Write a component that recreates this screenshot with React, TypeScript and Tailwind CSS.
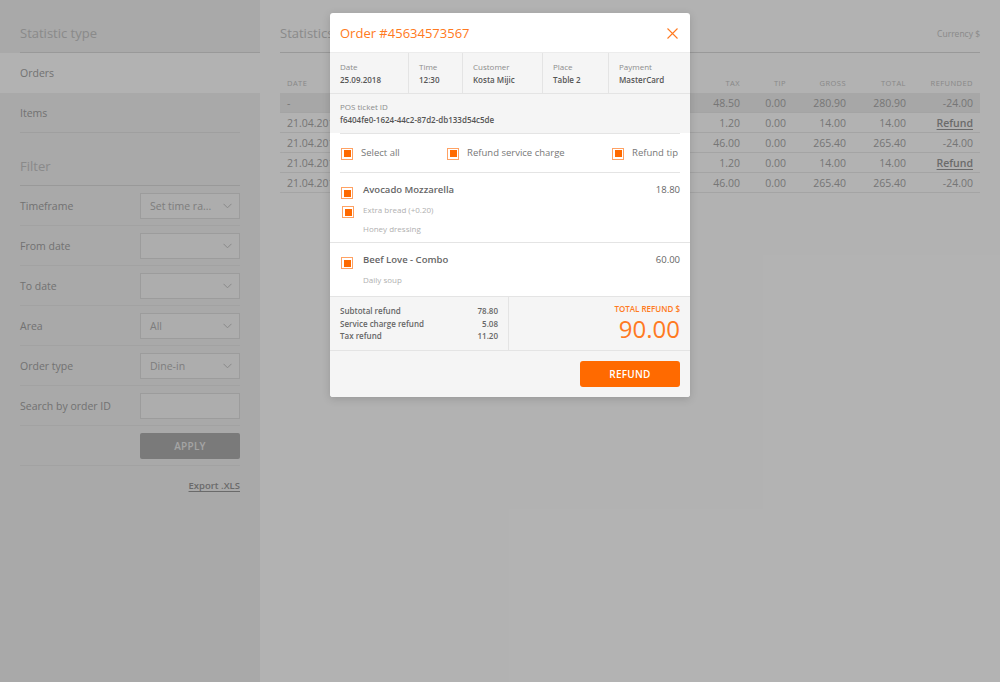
import React from 'react';

const ORANGE = '#ff7a21';

const Chevron = () => (
  <svg width="9" height="6" viewBox="0 0 9 6" fill="none">
    <polyline points="0.5,0.8 4.5,4.8 8.5,0.8" stroke="#c4c4c4" strokeWidth="1" />
  </svg>
);

const Check = ({ className = '' }: { className?: string }) => (
  <span
    className={`inline-flex w-[12px] h-[12px] shrink-0 items-center justify-center border border-[#ffa264] bg-white ${className}`}
  >
    <span className="block w-[7px] h-[7px] bg-[#ff6a00]" />
  </span>
);

type Filter = { label: string; value?: string; select: boolean };

const filters: Filter[] = [
  { label: 'Timeframe', value: 'Set time ra...', select: true },
  { label: 'From date', select: true },
  { label: 'To date', select: true },
  { label: 'Area', value: 'All', select: true },
  { label: 'Order type', value: 'Dine-in', select: true },
  { label: 'Search by order ID', select: false },
];

const rows = [
  { date: '-', tax: '48.50', tip: '0.00', gross: '280.90', total: '280.90', refunded: '-24.00' },
  { date: '21.04.2018', tax: '1.20', tip: '0.00', gross: '14.00', total: '14.00', refunded: null },
  { date: '21.04.2018', tax: '46.00', tip: '0.00', gross: '265.40', total: '265.40', refunded: '-24.00' },
  { date: '21.04.2018', tax: '1.20', tip: '0.00', gross: '14.00', total: '14.00', refunded: null },
  { date: '21.04.2018', tax: '46.00', tip: '0.00', gross: '265.40', total: '265.40', refunded: '-24.00' },
];

const info = [
  { label: 'Date', value: '25.09.2018', w: 'w-[79px]' },
  { label: 'Time', value: '12:30', w: 'w-[54px]' },
  { label: 'Customer', value: 'Kosta Mijic', w: 'w-[80px]' },
  { label: 'Place', value: 'Table 2', w: 'w-[66px]' },
  { label: 'Payment', value: 'MasterCard', w: 'flex-1' },
];

const Sidebar = () => (
  <aside className="w-[260px] shrink-0 bg-[#f2f2f2]">
    <div className="ml-5 h-[53px] pt-[16px] flex items-center border-b border-[#dcdcdc] text-[13px] text-[#c6c6c6]">
      Statistic type
    </div>
    <div className="h-[40px] pt-[2px] bg-white px-5 flex items-center text-[10.5px] text-[#a4a4a4]">Orders</div>
    <div className="mx-5 h-[40px] pt-[2px] flex items-center border-b border-[#e4e4e4] text-[10.5px] text-[#a4a4a4]">
      Items
    </div>
    <div className="mx-5 h-[53px] pt-[16px] flex items-center border-b border-[#dcdcdc] text-[13px] text-[#c6c6c6]">
      Filter
    </div>
    <div className="mx-5">
      {filters.map(f => (
        <div key={f.label} className="h-[40px] flex items-center justify-between border-b border-[#e8e8e8]">
          <span className="pt-[2px] text-[10.5px] text-[#a4a4a4]">{f.label}</span>
          <div className="w-[100px] h-[26px] border border-[#e0e0e0] bg-[#f8f8f8] flex items-center justify-between pl-[9px] pr-[7px]">
            <span className="pt-[2px] text-[10.5px] text-[#b4b4b4]">{f.value}</span>
            {f.select && <Chevron />}
          </div>
        </div>
      ))}
      <div className="h-[40px] flex items-center justify-end border-b border-[#e8e8e8]">
        <button className="w-[100px] h-[26px] pt-[2px] rounded-[2px] bg-[#afafaf] text-[10px] font-semibold tracking-wide text-[#ebebeb]">
          APPLY
        </button>
      </div>
      <div className="h-[41px] flex items-center justify-end">
        <span className="text-[9.5px] font-semibold text-[#999] underline underline-offset-2">Export .XLS</span>
      </div>
    </div>
  </aside>
);

const Stats = () => (
  <main className="flex-1 bg-white px-5">
    <div className="h-[53px] pt-[16px] flex items-center justify-between border-b border-[#dcdcdc]">
      <span className="text-[13px] text-[#c6c6c6]">Statistics</span>
      <span className="text-[8.5px] text-[#c6c6c6]">Currency $</span>
    </div>
    <div className="mt-[20px] h-[20px] pt-[2px] flex items-center px-[7px] text-[7.5px] tracking-[0.06em] text-[#c4c4c4]">
      <span className="flex-1">DATE</span>
      <span className="w-[50px] text-right">TAX</span>
      <span className="w-[46px] text-right">TIP</span>
      <span className="w-[60px] text-right">GROSS</span>
      <span className="w-[60px] text-right">TOTAL</span>
      <span className="w-[67px] text-right">REFUNDED</span>
    </div>
    {rows.map((r, i) => (
      <div
        key={i}
        className={`h-[20px] pt-[2px] flex items-center px-[7px] border-b border-[#ebebeb] text-[10.5px] text-[#aaa] ${i === 0 ? 'bg-[#f0f0f0]' : ''}`}
      >
        <span className="flex-1">{r.date}</span>
        <span className="w-[50px] text-right">{r.tax}</span>
        <span className="w-[46px] text-right">{r.tip}</span>
        <span className="w-[60px] text-right">{r.gross}</span>
        <span className="w-[60px] text-right">{r.total}</span>
        <span className="w-[67px] text-right">
          {r.refunded ?? <span className="font-semibold text-[#999] underline underline-offset-2">Refund</span>}
        </span>
      </div>
    ))}
  </main>
);

const RefundModal = () => (
  <div className="absolute left-[330px] top-[13px] w-[360px] overflow-hidden rounded-[3px] bg-white shadow-[0_2px_8px_rgba(0,0,0,0.15)]">
    <div className="h-[39px] pt-[2px] px-[10px] flex items-center justify-between">
      <span className="text-[13px]" style={{ color: ORANGE }}>
        Order #45634573567
      </span>
      <svg width="11" height="11" viewBox="0 0 11 11" className="mr-[2px]">
        <path d="M0.5 0.5 L10.5 10.5 M10.5 0.5 L0.5 10.5" stroke={ORANGE} strokeWidth="1.1" />
      </svg>
    </div>

    <div className="h-[41px] flex bg-[#f5f5f5] border-t border-[#ececec]">
      {info.map(c => (
        <div key={c.label} className={`${c.w} px-[10px] flex flex-col justify-center gap-[3px] border-r border-[#e4e4e4] last:border-r-0`}>
          <span className="text-[8px] leading-[10px] text-[#8c8c8c]">{c.label}</span>
          <span className="text-[8px] leading-[10px] font-semibold text-[#555]">{c.value}</span>
        </div>
      ))}
    </div>

    <div className="h-[40px] px-[10px] flex flex-col justify-center gap-[3px] bg-[#f5f5f5] border-t border-[#e4e4e4]">
      <span className="text-[8px] leading-[10px] text-[#8c8c8c]">POS ticket ID</span>
      <span className="text-[8px] leading-[10px] font-semibold text-[#555]">f6404fe0-1624-44c2-87d2-db133d54c5de</span>
    </div>

    <div className="mx-[10px] h-[40px] pt-[1px] flex items-center justify-between border-t border-[#e4e4e4] border-b text-[9.5px] text-[#777]">
      <label className="flex items-center gap-[8px]">
        <Check className="ml-px" /> Select all
      </label>
      <label className="flex items-center gap-[8px]">
        <Check /> Refund service charge
      </label>
      <label className="flex items-center gap-[8px] mr-[2px]">
        <Check /> Refund tip
      </label>
    </div>

    <div className="px-[10px] pt-[8px] pb-[4px] border-b border-[#e4e4e4]">
      <div className="h-[19px] flex items-center">
        <span className="w-[23px]"><Check className="ml-px" /></span>
        <span className="flex-1 text-[9.5px] font-semibold text-[#666]">Avocado Mozzarella</span>
        <span className="text-[9.5px] font-medium text-[#666]">18.80</span>
      </div>
      <div className="h-[19px] flex items-center">
        <span className="w-[23px]"><Check className="ml-[2px]" /></span>
        <span className="text-[8px] text-[#b0b0b0]">Extra bread (+0.20)</span>
      </div>
      <div className="h-[19px] flex items-center pl-[23px] text-[8px] text-[#b0b0b0]">Honey dressing</div>
    </div>

    <div className="px-[10px] pt-[8px] pb-[7px]">
      <div className="h-[19px] flex items-center">
        <span className="w-[23px]"><Check className="ml-px" /></span>
        <span className="flex-1 text-[9.5px] font-semibold text-[#666]">Beef Love - Combo</span>
        <span className="text-[9.5px] font-medium text-[#666]">60.00</span>
      </div>
      <div className="h-[19px] flex items-center pl-[23px] text-[8px] text-[#b0b0b0]">Daily soup</div>
    </div>

    <div className="h-[54px] flex bg-[#f5f5f5] border-t border-[#e4e4e4]">
      <div className="w-[179px] px-[10px] pt-px flex flex-col justify-center border-r border-[#e4e4e4] text-[8px] leading-[12.5px] font-semibold text-[#666]">
        <div className="flex justify-between"><span>Subtotal refund</span><span>78.80</span></div>
        <div className="flex justify-between"><span>Service charge refund</span><span>5.08</span></div>
        <div className="flex justify-between"><span>Tax refund</span><span>11.20</span></div>
      </div>
      <div className="flex-1 px-[10px] flex flex-col items-end justify-center">
        <span className="text-[8px] leading-[11px] font-semibold" style={{ color: ORANGE }}>TOTAL REFUND $</span>
        <span className="text-[24px] leading-[30px]" style={{ color: ORANGE }}>90.00</span>
      </div>
    </div>

    <div className="h-[47px] px-[10px] flex items-center justify-end bg-[#f5f5f5] border-t border-[#e4e4e4]">
      <button className="w-[100px] h-[26px] pt-px rounded-[3px] bg-[#ff6a00] text-[10px] font-semibold tracking-wide text-white">
        REFUND
      </button>
    </div>
  </div>
);

export default function App() {
  return (
    <div className="relative flex h-[682px] overflow-hidden font-['Open_Sans',sans-serif]">
      <Sidebar />
      <Stats />
      <div className="absolute inset-0 bg-black/30" />
      <RefundModal />
    </div>
  );
}
